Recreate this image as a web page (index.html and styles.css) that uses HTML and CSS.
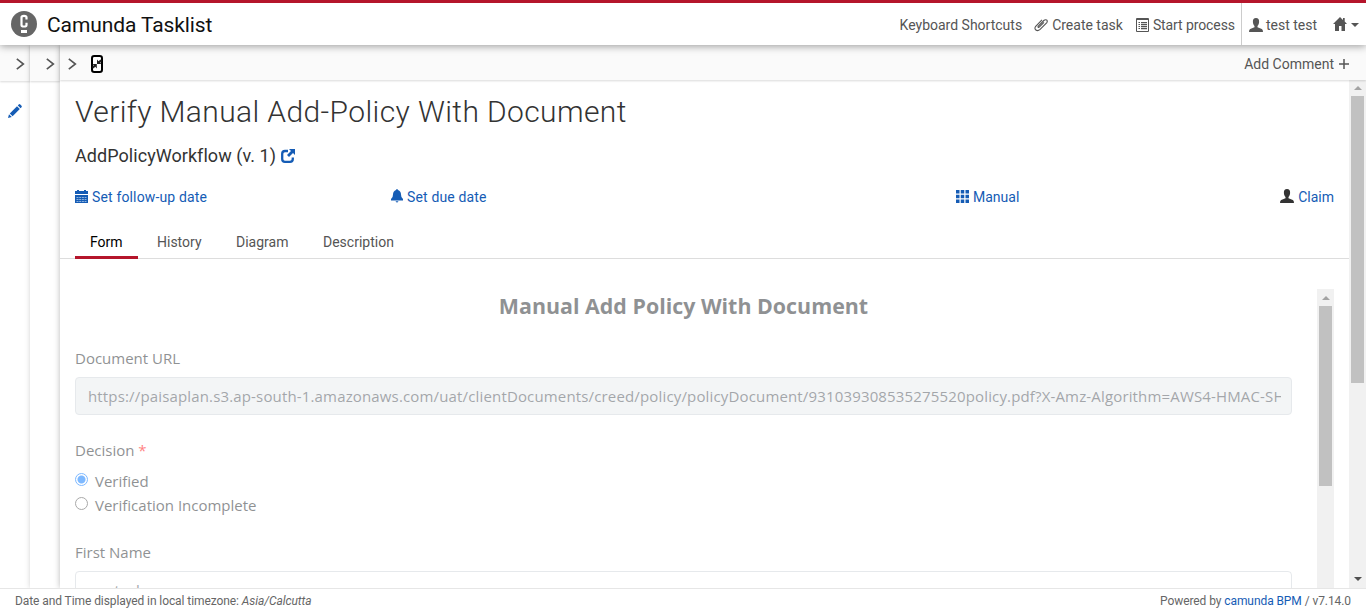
FILE: index.html
```html
<!DOCTYPE html>
<html lang="en">
<head>
<meta charset="utf-8">
<title>Camunda Tasklist</title>
<link rel="stylesheet" href="styles.css">
</head>
<body>
<header class="header">
  <div class="brand">
    <svg class="logo" viewBox="0 0 26 26"><circle cx="13" cy="13" r="13" fill="#666"/><path d="M15.500 8.500V6.400Q15.500 4.800 13 4.800T10.500 6.400V13.900Q10.500 15.500 13 15.500T15.500 13.900V11.800" fill="none" stroke="#fff" stroke-width="2.200"/><path d="M10 19h6v3h-6z" fill="#fff"/></svg>
    <span class="brand-name">Camunda Tasklist</span>
  </div>
  <nav class="nav">
    <a class="nav-item shortcuts">Keyboard Shortcuts</a>
    <a class="nav-item create"><svg class="clip" viewBox="0 0 16 14" fill="none" stroke="#555" stroke-width="1.200"><path d="M10.600 4.300 5.800 9.100C4.800 10.100 3.700 9.100 4.600 8.100L10.500 2.200C12.400.4 15.300 1.900 13.700 4.400L6.500 11.600C3.200 14.700-.7 11.500 1.800 8.400L8.500 1.600"/></svg><span>Create task</span></a>
    <a class="nav-item start"><svg class="list" viewBox="0 0 14 14"><path d="M.5.5h12v13H.5z" fill="none" stroke="#555"/><path d="M1 1h11v1H1zM2.500 4h1.500v1H2.500zm0 2h1.500v1H2.500zm0 2h1.500v1H2.500zm0 2h1.500v1H2.500zM5 4h6v1.200H5zm0 2h6v1.200H5zm0 2h6v1.200H5zm0 2h6v1.200H5z" fill="#555"/></svg><span>Start process</span></a>
    <a class="nav-item user"><svg class="person" viewBox="0 0 14 14"><path d="M7 0C4.800 0 3.700 1.500 3.900 3.900c.1 1.800.7 3 1.600 4v1.300L1.200 11Q0 11.600 0 14h14q0-2.400-1.200-3L8.500 9.200V7.900c.9-1 1.500-2.200 1.600-4C10.300 1.500 9.200 0 7 0z" fill="#555"/></svg><span>test test</span></a>
    <a class="nav-item home"><svg class="house" viewBox="0 0 14 14"><path d="M7 0 0 7h2v7h4V9h2.500v5H12V7h2l-2.300-2.400V1H10v1.900z" fill="#555"/></svg><i class="caret"></i></a>
  </nav>
</header>
<main class="columns">
  <section class="rail filters">
    <div class="bar"><svg class="chev" viewBox="0 0 9 12"><path d="M.8.8 7.400 6 .8 11.200" fill="none" stroke="#555" stroke-width="1.600"/></svg></div>
    <svg class="pencil" viewBox="0 0 14 14"><path d="M0 14 1 10.200 3.800 13zM1.800 9.400 9 2.200 11.800 5 4.600 12.200zM9.800 1.400 10.700.5q.8-.8 1.600 0l1.200 1.200q.8.8 0 1.600l-.9.900z" fill="#155cb5"/></svg>
  </section>
  <section class="rail tasks">
    <div class="bar"><svg class="chev" viewBox="0 0 9 12"><path d="M.8.8 7.400 6 .8 11.200" fill="none" stroke="#555" stroke-width="1.600"/></svg></div>
  </section>
  <section class="task">
    <div class="bar task-bar">
      <svg class="chev" viewBox="0 0 9 12"><path d="M.8.8 7.400 6 .8 11.200" fill="none" stroke="#555" stroke-width="1.600"/></svg>
      <svg class="shrink" viewBox="0 0 12 18"><rect x="1" y="1" width="10" height="16" rx="2.200" fill="#fff" stroke="#000" stroke-width="2"/><path d="M6 4.500V9h4.500L9.200 7.700 11 5.900 9.600 4.500 7.500 6.200zM5.800 13.500V9H1.500L2.800 10.300 1 12.100 2.400 13.500 4.300 11.800z" fill="#222"/></svg>
      <a class="comment"><span>Add Comment</span><svg class="plus" viewBox="0 0 10 10"><path d="M5 0v10M0 5h10" stroke="#555" stroke-width="1.500"/></svg></a>
    </div>
    <div class="body">
      <div class="content">
        <h2 class="title">Verify Manual Add-Policy With Document</h2>
        <h3 class="process"><span>AddPolicyWorkflow (v. 1)</span><svg class="external" viewBox="0 0 14 14"><path d="M7 2H4Q1.200 2 1.200 4.800V10Q1.200 12.800 4 12.800H9Q11.800 12.800 11.800 10V8.500" fill="none" stroke="#155cb5" stroke-width="2.300"/><path d="M8 0h6v6l-2-2-4 4-2-2 4-4z" fill="#155cb5"/></svg></h3>
        <div class="meta">
          <a class="follow"><svg class="cal" viewBox="0 0 13 13"><path d="M0 1h2V0h2v1h5V0h2v1h2v3H0zM0 5h13v8H0z" fill="#155cb5"/><path d="M1.500 7.500h10M1.500 9.500h10M1.500 11.500h10" stroke="#a9c6e8" stroke-width=".8" stroke-dasharray="2 .7"/></svg><span>Set follow-up date</span></a>
          <a class="due"><svg class="bell" viewBox="0 0 12 14"><path d="M5 1q1-2 2 0 3 1 3 4.500Q10 9 12 10v1.500H0V10q2-1 2-4.500Q2 2 5 1zM4.500 12.300h3q-1.500 2.400-3 0z" fill="#155cb5"/></svg><span>Set due date</span></a>
          <a class="groups"><svg class="grid" viewBox="0 0 13 13"><path d="M0 0h3.500v3.500H0zm4.750 0h3.500v3.500h-3.500zm4.750 0H13v3.500H9.500zM0 4.750h3.500v3.500H0zm4.750 0h3.500v3.500h-3.500zm4.750 0H13v3.500H9.500zM0 9.500h3.500V13H0zm4.750 0h3.500V13h-3.500zm4.750 0H13V13H9.500z" fill="#155cb5"/></svg><span>Manual</span></a>
          <a class="claim"><svg class="person" viewBox="0 0 14 14"><path d="M7 0C4.800 0 3.700 1.500 3.900 3.900c.1 1.800.7 3 1.600 4v1.300L1.200 11Q0 11.600 0 14h14q0-2.400-1.200-3L8.500 9.200V7.900c.9-1 1.500-2.200 1.600-4C10.300 1.500 9.200 0 7 0z" fill="#333"/></svg><span>Claim</span></a>
        </div>
        <div class="tabs"><a class="tab active">Form</a><a class="tab history">History</a><a class="tab diagram">Diagram</a><a class="tab">Description</a></div>
        <div class="form-wrap">
          <div class="form">
            <h4 class="form-title">Manual Add Policy With Document</h4>
            <div class="label first">Document URL</div>
            <div class="input disabled"><div class="value">https://paisaplan.s3.ap-south-1.amazonaws.com/uat/clientDocuments/creed/policy/policyDocument/931039308535275520policy.pdf?X-Amz-Algorithm=AWS4-HMAC-SHA256</div></div>
            <div class="label decision">Decision <b class="req">*</b></div>
            <div class="option"><i class="radio on"></i><span>Verified</span></div>
            <div class="option"><i class="radio"></i><span>Verification Incomplete</span></div>
            <div class="label">First Name</div>
            <div class="input"><div class="value">neetesh</div></div>
          </div>
          <div class="scroll inner"><i class="arrow up"></i><i class="thumb"></i></div>
        </div>
      </div>
      <div class="scroll outer"><i class="arrow up"></i><i class="thumb"></i><i class="arrow down"></i></div>
    </div>
  </section>
</main>
<footer class="footer">
  <div>Date and Time displayed in local timezone: <em>Asia/Calcutta</em></div>
  <div class="powered">Powered by <a>camunda BPM</a> / v7.14.0</div>
</footer>
</body>
</html>
```
FILE: styles.css
```css
* { box-sizing: border-box; }
body { margin: 0; height: 612px; display: flex; flex-direction: column; overflow: hidden; background: #fff; color: #333; font: 14px/20px Roboto, "Liberation Sans", sans-serif; }
svg { display: block; flex: none; overflow: visible; }
h2, h3, h4 { margin: 0; font-weight: 400; }
.header { flex: none; height: 45px; border-top: 3px solid #b5152b; background: #fff; display: flex; justify-content: space-between; box-shadow: 0 1px 8px rgba(0,0,0,.4); position: relative; z-index: 3; }
.brand { display: flex; align-items: center; padding-left: 11px; gap: 10px; color: #111; font-size: 21px; letter-spacing: -.1px; white-space: nowrap; }
.brand-name { padding-top: 2px; }
.logo { width: 26px; height: 26px; }
.nav { display: flex; color: #555; white-space: nowrap; }
.nav-item { display: flex; align-items: center; gap: 3px; padding-top: 2px; }
.create { margin-left: 12px; }
.start { margin-left: 13px; padding-right: 6px; letter-spacing: -.1px; }
.user { border-left: 1px solid #ccc; padding-left: 7px; }
.home { padding: 0 7px 0 16px; gap: 4px; }
.clip { width: 15px; height: 14px; }
.list, .person, .house { width: 14px; height: 14px; }
.caret { border: 4px solid transparent; border-top-color: #555; border-bottom: 0; margin-top: 2px; }
.columns { flex: 1; min-height: 0; display: flex; }
.rail { width: 30px; flex: none; background: #fff; box-shadow: 1px 0 6px rgba(0,0,0,.25); }
.bar { height: 36px; background: #fafafa; display: flex; align-items: center; padding: 2px 5px 0 0; justify-content: flex-end; box-shadow: 0 1px 2px rgba(0,0,0,.15); }
.chev { width: 9px; height: 12px; }
.pencil { width: 14px; height: 14px; margin: 23px 0 0 8px; }
.task { flex: 1; min-width: 0; display: flex; flex-direction: column; box-shadow: 0 0 6px rgba(0,0,0,.28); background: #fff; }
.task-bar { height: 35px; flex: none; justify-content: flex-start; padding: 2px 17px 0 8px; position: relative; }
.shrink { width: 12px; height: 18px; margin-left: 14px; }
.comment { margin-left: auto; display: flex; align-items: center; gap: 5px; color: #555; }
.plus { width: 10px; height: 10px; }
.body { flex: 1; min-height: 0; display: flex; }
.content { flex: 1; min-width: 0; display: flex; flex-direction: column; }
.title { font-size: 30px; font-weight: 300; line-height: 40px; letter-spacing: .39px; padding: 12px 0 0 15px; white-space: nowrap; }
.process { font-size: 18px; line-height: 24px; display: flex; align-items: center; gap: 5px; padding: 12px 0 0 15px; letter-spacing: .05px; }
.external { width: 14px; height: 14px; }
.meta { display: grid; grid-template-columns: 316px 565px 1fr auto; padding: 19px 15px 0; color: #155cb5; white-space: nowrap; }
.meta a { display: flex; align-items: center; gap: 4px; }
.meta svg { margin-top: -2px; }
.follow, .due { letter-spacing: .15px; }
.cal, .grid { width: 13px; height: 13px; }
.bell { width: 12px; height: 14px; }
.tabs { flex: none; display: flex; height: 36px; margin-top: 16px; padding-left: 15px; border-bottom: 1px solid #ddd; color: #555; }
.tab { height: 36px; padding: 9px 0 0 16px; }
.active { width: 63px; padding-left: 15px; margin-right: 3px; color: #000; border-bottom: 3px solid #b5152b; }
.history { width: 79px; }
.diagram { width: 87px; }
.form-wrap { flex: 1; min-height: 0; display: flex; margin: 30px 15px 0; overflow: hidden; }
.form { flex: 1; min-width: 0; padding-right: 25px; opacity: .5; font: 15px/24px "Open Sans", "Noto Sans", sans-serif; color: #212529; }
.form-title { font-size: 21.400px; font-weight: 700; line-height: 26px; text-align: center; padding-top: 4px; }
.label { margin-top: 23px; height: 24px; }
.first { margin-top: 27px; }
.decision { margin-bottom: 7px; }
.input { height: 38px; margin-top: 7px; border: 1px solid #ced4da; border-radius: 4px; padding: 6px 10px 6px 12px; color: #495057; letter-spacing: .155px; }
.disabled { background: #e9ecef; }
.value { overflow: hidden; white-space: nowrap; }
.req { color: red; font-weight: 400; }
.option { display: flex; align-items: center; gap: 7px; height: 24px; }
.radio { width: 13px; height: 13px; border: 1px solid #555; border-radius: 50%; margin-top: -3px; }
.on { border-color: #0075ff; background: radial-gradient(circle, #0075ff 3.500px, #fff 4.500px); }
.scroll { width: 17px; flex: none; background: #f1f1f1; display: flex; flex-direction: column; align-items: center; }
.thumb { width: 13px; background: #c1c1c1; }
.inner .thumb { height: 180px; }
.outer .thumb { height: 287px; }
.arrow { border: 4px solid transparent; }
.up { border-top: 0; border-bottom-color: #a3a3a3; margin: 7px 0 6px; }
.outer .up { margin: 6px 0; }
.down { border-bottom: 0; border-top-color: #505050; margin: auto 0 7px; }
.footer { flex: none; height: 24px; border-top: 1px solid #e6e6e6; background: #fff; display: flex; justify-content: space-between; padding: 2px 15px 0; font-size: 12px; line-height: 20px; letter-spacing: -.08px; color: #666; position: relative; z-index: 3; white-space: pre; }
.footer a { color: #155cb5; }
```
